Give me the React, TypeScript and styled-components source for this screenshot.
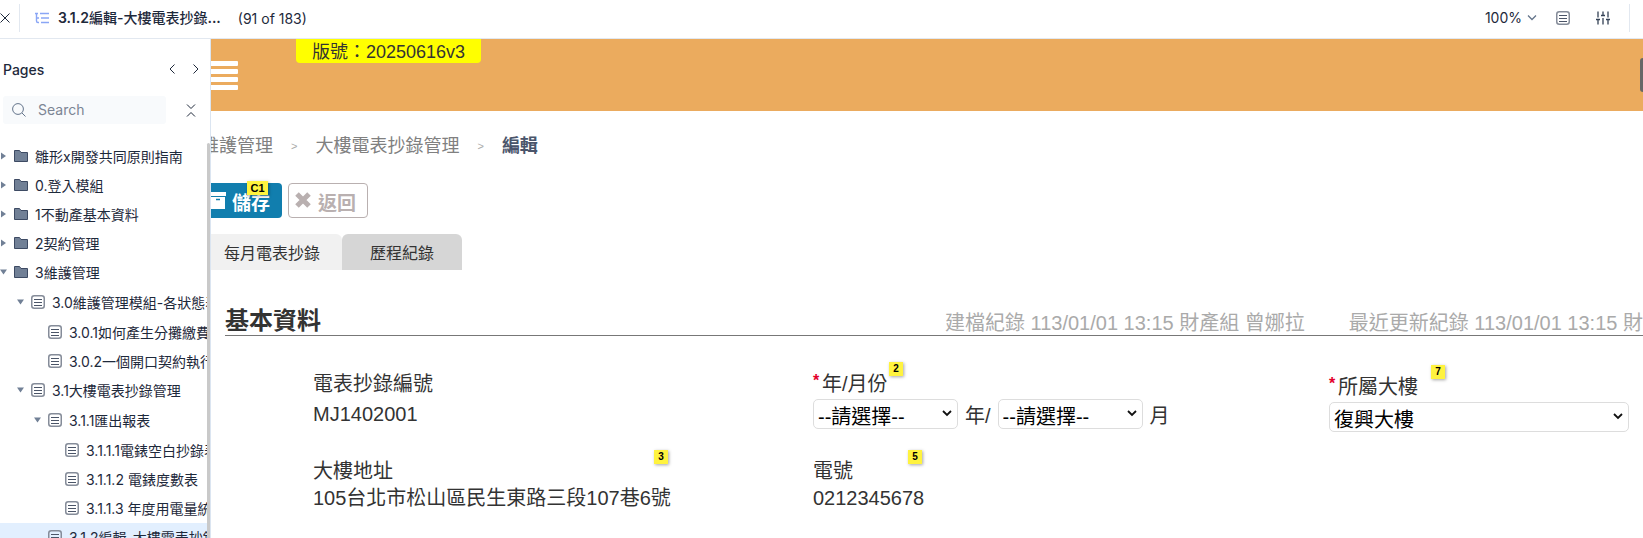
import React from "react";
import styled, { createGlobalStyle, css } from "styled-components";

const uiFont = `Inter, "Noto Sans CJK TC", sans-serif`;
const pageFont = `"Liberation Sans", "Noto Sans CJK TC", sans-serif`;

const GlobalStyle = createGlobalStyle`
  *, *::before, *::after { box-sizing: border-box; }
  body { margin: 0; background: #fff; overflow: hidden; }
  button, input, select { font: inherit; margin: 0; }
  button { cursor: pointer; }
`;

const Shell = styled.div`
  display: flex;
  flex-direction: column;
  height: 100vh;
  font-family: ${uiFont};
  font-size: 14px;
  color: #1e293b;
`;

/* Top bar */

const TopBar = styled.header`
  display: flex;
  flex: none;
  align-items: center;
  height: 39px;
  padding: 0 13px 2px 0;
  border-bottom: 1px solid #e2e8f0;
  white-space: nowrap;
`;

const IconButton = styled.button`
  display: flex;
  flex: none;
  padding: 0;
  border: 0;
  background: none;
  color: #1e293b;
`;

const Divider = styled.span`
  width: 1px;
  height: 28px;
  background: #e2e8f0;
`;

const TitleGroup = styled.div`
  display: flex;
  flex: 1;
  align-items: center;
  gap: 9px;
  margin-left: 15px;
`;

const DocTitle = styled.h1`
  margin: 0 8px 0 0;
  font-size: 14px;
  line-height: 20px;
  font-weight: 600;
`;

const DocName = styled.span`
  font-weight: 500;
`;

const CloseButton = styled(IconButton)`
  margin-right: 9px;
`;

const Tools = styled.div`
  display: flex;
  align-items: center;
  gap: 19px;
`;

const ToolIcons = styled.div`
  display: flex;
  align-items: center;
  gap: 26px;
`;

const ZoomButton = styled(IconButton)`
  align-items: center;
  gap: 5px;
  line-height: 20px;
`;

/* Sidebar */

const Body = styled.div`
  display: flex;
  flex: 1;
  min-height: 0;
`;

const Sidebar = styled.aside`
  display: flex;
  flex: none;
  flex-direction: column;
  width: 211px;
  border-right: 1px solid #dbe5f1;
`;

const PagesHeader = styled.div`
  display: flex;
  align-items: center;
  justify-content: space-between;
  height: 57px;
  padding: 5px 11px 0 3px;
`;

const PagesTitle = styled.h2`
  margin: 0;
  font-size: 14px;
  line-height: 20px;
  font-weight: 500;
`;

const PagerButtons = styled.div`
  display: flex;
  gap: 18px;
  padding-bottom: 3px;
`;

const SearchRow = styled.div`
  display: flex;
  align-items: center;
  justify-content: space-between;
  padding: 0 14px 0 3px;
`;

const SearchBox = styled.label`
  display: flex;
  align-items: center;
  gap: 12px;
  width: 163px;
  height: 28px;
  padding: 0 9px;
  border-radius: 3px;
  background: #f8fafc;
`;

const SearchInput = styled.input`
  flex: 1;
  min-width: 0;
  padding: 0;
  border: 0;
  outline: 0;
  background: none;
  line-height: 20px;
  &::placeholder { color: #7c8594; opacity: 1; }
`;

const TreeArea = styled.nav`
  display: flex;
  flex: 1;
  min-height: 0;
  padding-top: 18px;
  overflow: hidden;
`;

const TreeScroll = styled.div`
  flex: 1;
  min-width: 0;
  overflow: hidden;
`;

const ScrollThumb = styled.div`
  flex: none;
  width: 3px;
  margin-top: 1px;
  border-radius: 3px 3px 0 0;
  background: #c9c9c9;
`;

const TreeList = styled.ul`
  margin: 0;
  padding: 0;
  list-style: none;
  & & { padding-top: 1px; }
`;

const TreeRow = styled.a<{ $level: number; $active?: boolean }>`
  display: flex;
  align-items: center;
  gap: 7px;
  height: 29px;
  padding-bottom: 2px;
  padding-left: ${(p) => p.$level * 17}px;
  background: ${(p) => (p.$active ? "#e2effe" : "transparent")};
  color: #1e293b;
  text-decoration: none;
  white-space: nowrap;
  svg { flex: none; }
`;

/* Prototype page */

const Page = styled.main`
  flex: 1;
  min-width: 0;
  overflow: hidden;
  font-family: ${pageFont};
  color: #333;
`;

const Banner = styled.div`
  display: flex;
  align-items: flex-start;
  height: 72px;
  background: #ebab5e;
`;

const MenuButton = styled.button`
  display: flex;
  flex-direction: column;
  gap: 3px;
  width: 27px;
  margin-top: 22px;
  padding: 0;
  border: 0;
  background: none;
`;

const MenuBar = styled.span`
  width: 100%;
  height: 5px;
  border-radius: 0 1px 1px 0;
  background: #fff;
`;

const Version = styled.div`
  margin-left: 58px;
  padding: 2px 16px 0;
  border-radius: 0 0 4px 4px;
  background: #ff0;
  font-size: 18px;
  line-height: 22px;
`;

const EdgeButton = styled.button`
  width: 3px;
  height: 34px;
  margin: 19px 0 0 auto;
  padding: 0;
  border: 0;
  border-radius: 5px 0 0 5px;
  background: #666;
`;

const Crumbs = styled.nav`
  display: flex;
  align-items: center;
  gap: 18px;
  margin: 22px 0 0 -10px;
  font-size: 18px;
  line-height: 26px;
  white-space: nowrap;
`;

const Crumb = styled.a`
  color: #808080;
  text-decoration: none;
`;

const CrumbMark = styled.span`
  font-size: 11px;
  color: #aaa;
`;

const CurrentCrumb = styled.strong`
  color: #4a556b;
`;

const Actions = styled.div`
  display: flex;
  gap: 6px;
  margin-top: 24px;
`;

const ActionButton = styled.button<{ $primary?: boolean }>`
  position: relative;
  display: flex;
  align-items: center;
  gap: 6px;
  height: 35px;
  font-size: 19px;
  line-height: 28px;
  font-weight: 700;
  svg { flex: none; }
  ${(p) =>
    p.$primary
      ? css`
          padding: 6px 12px 0 0;
          border: 0;
          border-radius: 0 4px 4px 0;
          background: #117eae;
          color: #fff;
        `
      : css`
          padding: 6px 11px 0 5px;
          border: 1px solid #b9b0b0;
          border-radius: 4px;
          background: #fff;
          color: #b9b0b0;
        `}
`;

const ButtonIcon = styled.span`
  display: flex;
  padding-bottom: 7px;
`;

const Note = styled.span<{ $left: number; $top: number; $wide?: boolean }>`
  position: absolute;
  left: ${(p) => p.$left}px;
  top: ${(p) => p.$top}px;
  width: ${(p) => (p.$wide ? 21 : 14)}px;
  height: 14px;
  background: #fff33f;
  box-shadow: 1px 1px 3px rgba(0, 0, 0, 0.35);
  color: #000;
  font-size: ${(p) => (p.$wide ? 11 : 10)}px;
  line-height: 14px;
  font-weight: 700;
  text-align: center;
`;

const Tabs = styled.div`
  display: flex;
  margin-top: 16px;
`;

const Tab = styled.button<{ $selected?: boolean }>`
  height: 36px;
  padding: ${(p) => (p.$selected ? "0 22px 0 13px" : "0 28px")};
  border: 0;
  border-radius: ${(p) => (p.$selected ? "0 6px 0 0" : "6px 6px 0 0")};
  background: ${(p) => (p.$selected ? "#f1f1f1" : "#d6d6d6")};
  color: #333;
  font-size: 16px;
`;

const SectionHead = styled.div`
  display: grid;
  grid-template-columns: 720fr 698fr;
  align-items: end;
  height: 66px;
  margin-left: 14px;
  border-bottom: 1px solid #777;
  white-space: nowrap;
`;

const SectionTitle = styled.h3`
  margin: 0;
  font-size: 24px;
  line-height: 28px;
`;

const Records = styled.div`
  display: flex;
  gap: 44px;
  min-width: 0;
  color: #aaa;
  font-size: 20px;
  line-height: 24px;
`;

const Fields = styled.div`
  display: grid;
  grid-template-columns: minmax(0, 500fr) minmax(0, 516fr) minmax(0, 300fr);
  row-gap: 24px;
  margin-left: 14px;
  padding: 34px 14px 0 88px;
  font-size: 20px;
  line-height: 28px;
  white-space: nowrap;
`;

const Field = styled.div<{ $lower?: boolean }>`
  position: relative;
  padding-top: ${(p) => (p.$lower ? 3 : 0)}px;
`;

const FieldLabel = styled.label<{ $tight?: boolean }>`
  display: flex;
  align-items: flex-start;
  height: ${(p) => (p.$tight ? 26 : 29)}px;
`;

const Required = styled.span`
  width: 9px;
  color: #e3002b;
  font-size: 16px;
  font-weight: 700;
  line-height: 22px;
`;

const FieldValue = styled.div`
  padding-top: 1px;
`;

const Choices = styled.div`
  display: flex;
  align-items: flex-start;
  gap: 7px;
`;

const SelectBox = styled.div<{ $full?: boolean }>`
  position: relative;
  width: ${(p) => (p.$full ? "100%" : "145px")};
  height: 30px;
  svg {
    position: absolute;
    top: 11px;
    right: 6px;
    pointer-events: none;
  }
`;

const Select = styled.select`
  appearance: none;
  width: 100%;
  height: 100%;
  padding: 6px 20px 0 4px;
  border: 1px solid #ddd;
  border-radius: 5px;
  background: #fff;
  color: #000;
  font-size: 20px;
  line-height: 22px;
`;

const Unit = styled.span`
  line-height: 34px;
`;

/* Icons */

const Svg = ({ w, h, children }: { w: number; h: number; children: React.ReactNode }) => (
  <svg width={w} height={h} viewBox={`0 0 ${w} ${h}`} fill="none" stroke="currentColor" aria-hidden="true">
    {children}
  </svg>
);

const PageIcon = () => (
  <Svg w={14} h={14}>
    <rect x="0.75" y="0.75" width="12.5" height="12.5" rx="2.5" stroke="#858c99" strokeWidth="1.5" />
    <path d="M3 4.500h8M3 7.500h8M3 10.500h8" stroke="#4b5568" />
  </Svg>
);

const FolderIcon = () => (
  <Svg w={14} h={14}>
    <path d="M0.5 12.5v-11h5l1.5 2h6.5v9z" fill="#718096" stroke="#3d4a63" />
  </Svg>
);

const Arrow = ({ state }: { state?: "open" | "closed" }) => (
  <Svg w={7} h={8}>
    {state === "open" && <path d="M0 1.5h7L3.5 6.5z" fill="#718096" stroke="none" />}
    {state === "closed" && <path d="M1 0.5v7L6 4z" fill="#718096" stroke="none" />}
  </Svg>
);

const SelectArrow = () => (
  <Svg w={10} h={7}>
    <path d="M1 1l4 4 4-4" stroke="#111" strokeWidth="1.8" />
  </Svg>
);

type Item = { text: string; open?: boolean; active?: boolean; children?: Item[] };

const pages: Item[] = [
  { text: "雛形x開發共同原則指南", open: false },
  { text: "0.登入模組", open: false },
  { text: "1不動產基本資料", open: false },
  { text: "2契約管理", open: false },
  {
    text: "3維護管理",
    open: true,
    children: [
      {
        text: "3.0維護管理模組-各狀態表",
        open: true,
        children: [{ text: "3.0.1如何產生分攤繳費單" }, { text: "3.0.2一個開口契約執行" }],
      },
      {
        text: "3.1大樓電表抄錄管理",
        open: true,
        children: [
          {
            text: "3.1.1匯出報表",
            open: true,
            children: [
              { text: "3.1.1.1電錶空白抄錄表" },
              { text: "3.1.1.2 電錶度數表" },
              { text: "3.1.1.3 年度用電量統計" },
            ],
          },
          { text: "3.1.2編輯-大樓電表抄錄", active: true },
        ],
      },
    ],
  },
];

const Tree = ({ items, level = 0 }: { items: Item[]; level?: number }) => (
  <TreeList>
    {items.map((item) => (
      <li key={item.text}>
        <TreeRow href="#" $level={level} $active={item.active}>
          <Arrow state={item.open === undefined ? undefined : item.open ? "open" : "closed"} />
          {level === 0 ? <FolderIcon /> : <PageIcon />}
          {item.text}
        </TreeRow>
        {item.children && <Tree items={item.children} level={level + 1} />}
      </li>
    ))}
  </TreeList>
);

export default function App() {
  return (
    <Shell>
      <GlobalStyle />
      <TopBar>
        <CloseButton aria-label="Close">
          <Svg w={10} h={10}>
            <path d="M0.5 0.5l9 9M9.5 0.5l-9 9" />
          </Svg>
        </CloseButton>
        <Divider />
        <TitleGroup>
          <Svg w={14} h={12}>
            <path d="M0 1.5h3M5 1.5h9M6 6h8M6 10.5h8" stroke="#8aa6f5" strokeWidth="1.6" />
            <path d="M1.5 2v7q0 1.5 1.5 1.5h1M1.5 6h2.5" stroke="#8aa6f5" strokeWidth="1.4" />
          </Svg>
          <DocTitle>
            3.1.2<DocName>編輯-大樓電表抄錄</DocName>...
          </DocTitle>
          <span>(91 of 183)</span>
        </TitleGroup>
        <Tools>
          <ZoomButton>
            100%
            <Svg w={10} h={6}>
              <path d="M1 0.5l4 4 4-4" stroke="#64748b" strokeWidth="1.3" />
            </Svg>
          </ZoomButton>
          <ToolIcons>
            <IconButton aria-label="Notes">
              <PageIcon />
            </IconButton>
            <IconButton aria-label="Settings">
              <Svg w={14} h={14}>
                <path
                  d="M2 0.5v6M0 8.5h4M2 8.5v5M7 0.5v4M5 4.5h4M7 7v6.5M12 0.5v6M10 8.5h4M12 8.5v5"
                  stroke="#334155"
                  strokeWidth="1.3"
                />
              </Svg>
            </IconButton>
          </ToolIcons>
          <Divider />
        </Tools>
      </TopBar>
      <Body>
        <Sidebar>
          <PagesHeader>
            <PagesTitle>Pages</PagesTitle>
            <PagerButtons>
              <IconButton aria-label="Previous page">
                <Svg w={6} h={10}>
                  <path d="M5.5 0.5L1 5l4.5 4.5" />
                </Svg>
              </IconButton>
              <IconButton aria-label="Next page">
                <Svg w={6} h={10}>
                  <path d="M0.5 0.5L5 5L0.5 9.5" />
                </Svg>
              </IconButton>
            </PagerButtons>
          </PagesHeader>
          <SearchRow>
            <SearchBox>
              <Svg w={14} h={14}>
                <circle cx="6" cy="6" r="5.4" stroke="#64748b" />
                <path d="M10 10l3.5 3.5" stroke="#64748b" />
              </Svg>
              <SearchInput placeholder="Search" aria-label="Search pages" />
            </SearchBox>
            <IconButton aria-label="Collapse all">
              <Svg w={10} h={13}>
                <path d="M1 0.5l4 4 4-4M1 12.5l4-4 4 4" />
              </Svg>
            </IconButton>
          </SearchRow>
          <TreeArea>
            <TreeScroll>
              <Tree items={pages} />
            </TreeScroll>
            <ScrollThumb />
          </TreeArea>
        </Sidebar>
        <Page>
          <Banner>
            <MenuButton aria-label="Menu">
              <MenuBar />
              <MenuBar />
              <MenuBar />
              <MenuBar />
            </MenuButton>
            <Version>版號：20250616v3</Version>
            <EdgeButton aria-label="Open panel" />
          </Banner>
          <Crumbs>
            <Crumb href="#">維護管理</Crumb>
            <CrumbMark>&gt;</CrumbMark>
            <Crumb href="#">大樓電表抄錄管理</Crumb>
            <CrumbMark>&gt;</CrumbMark>
            <CurrentCrumb>編輯</CurrentCrumb>
          </Crumbs>
          <Actions>
            <ActionButton $primary>
              <ButtonIcon>
                <Svg w={15} h={17}>
                  <path d="M0 0h15v4H0zM0 5h14v12H0z" fill="#fff" stroke="none" />
                  <path d="M5 7.5h4" stroke="#117eae" strokeWidth="1.5" />
                </Svg>
              </ButtonIcon>
              儲存
              <Note $wide $left={36} $top={-2}>C1</Note>
            </ActionButton>
            <ActionButton>
              <ButtonIcon>
                <Svg w={18} h={18}>
                  <path d="M3 3l12 12M15 3L3 15" strokeWidth="5" />
                </Svg>
              </ButtonIcon>
              返回
            </ActionButton>
          </Actions>
          <Tabs role="tablist">
            <Tab role="tab" aria-selected="true" $selected>每月電表抄錄</Tab>
            <Tab role="tab" aria-selected="false">歷程紀錄</Tab>
          </Tabs>
          <SectionHead>
            <SectionTitle>基本資料</SectionTitle>
            <Records>
              <span>建檔紀錄 113/01/01 13:15 財產組 曾娜拉</span>
              <span>最近更新紀錄 113/01/01 13:15 財產組 曾娜拉</span>
            </Records>
          </SectionHead>
          <Fields>
            <Field>
              <FieldLabel as="div">電表抄錄編號</FieldLabel>
              <FieldValue>MJ1402001</FieldValue>
            </Field>
            <Field>
              <FieldLabel htmlFor="year">
                <Required>*</Required>年/月份
              </FieldLabel>
              <Choices>
                <SelectBox>
                  <Select id="year">
                    <option>--請選擇--</option>
                  </Select>
                  <SelectArrow />
                </SelectBox>
                <Unit>年/</Unit>
                <SelectBox>
                  <Select aria-label="月">
                    <option>--請選擇--</option>
                  </Select>
                  <SelectArrow />
                </SelectBox>
                <Unit>月</Unit>
              </Choices>
              <Note $left={76} $top={-8}>2</Note>
            </Field>
            <Field $lower>
              <FieldLabel htmlFor="building">
                <Required>*</Required>所屬大樓
              </FieldLabel>
              <SelectBox $full>
                <Select id="building">
                  <option>復興大樓</option>
                </Select>
                <SelectArrow />
              </SelectBox>
              <Note $left={102} $top={-5}>7</Note>
            </Field>
            <Field>
              <FieldLabel as="div" $tight>大樓地址</FieldLabel>
              <FieldValue>105台北市松山區民生東路三段107巷6號</FieldValue>
              <Note $left={341} $top={-7}>3</Note>
            </Field>
            <Field>
              <FieldLabel as="div" $tight>電號</FieldLabel>
              <FieldValue>0212345678</FieldValue>
              <Note $left={95} $top={-7}>5</Note>
            </Field>
          </Fields>
        </Page>
      </Body>
    </Shell>
  );
}
